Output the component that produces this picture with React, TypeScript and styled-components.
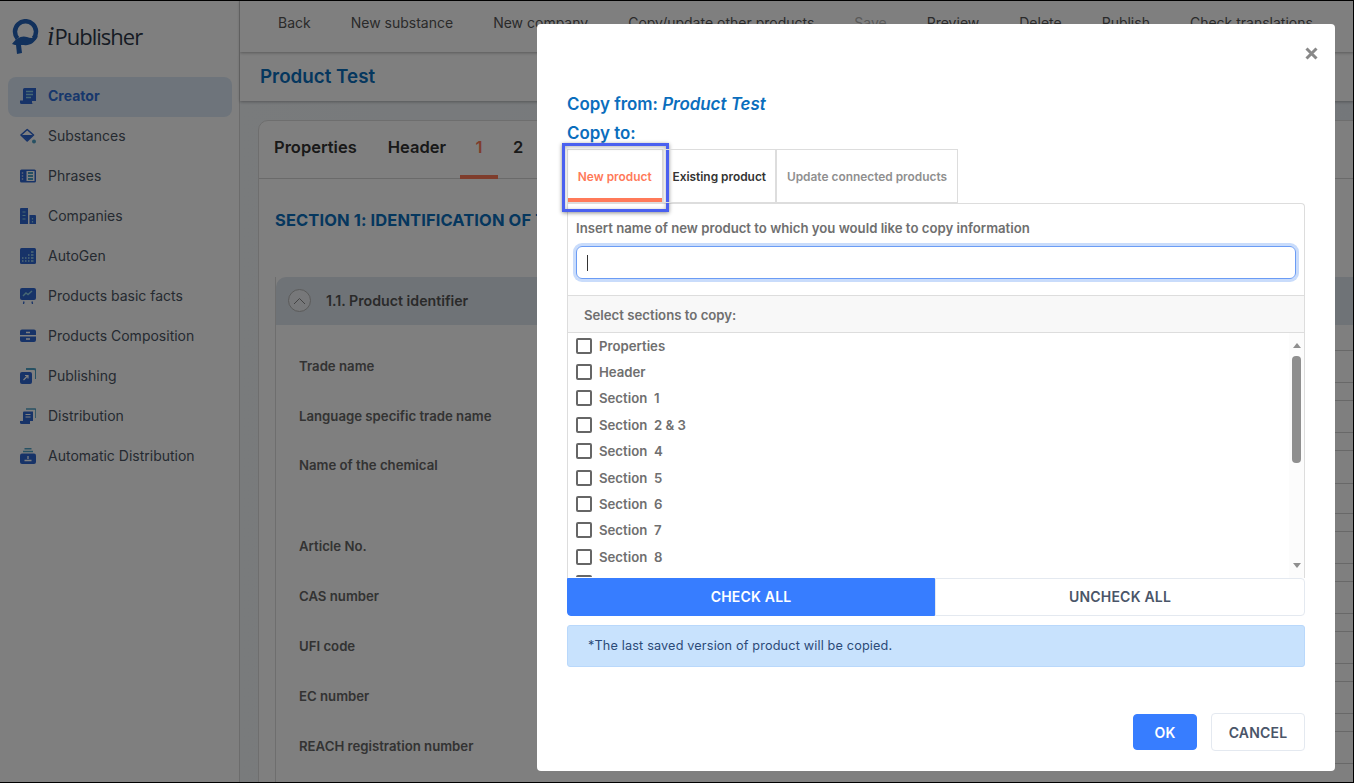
import React, { FC, ReactNode } from 'react'
import styled, { createGlobalStyle } from 'styled-components'

const GlobalStyle = createGlobalStyle`
	html, body {
		margin: 0;
		height: 100%;
		overflow: hidden;
		font-family: Inter, "Liberation Sans", sans-serif;
	}
	* {
		box-sizing: border-box;
	}
`

const Page = styled.div`
	display: flex;
	width: 1354px;
	height: 783px;
	overflow: hidden;
	background: #eef3f8;
`

const Sidebar = styled.aside`
	flex: 0 0 240px;
	height: 100%;
	padding: 0 7px 0 8px;
	background: #fff;
	border-right: 1px solid #d9d9d9;
`

const LogoRow = styled.div`
	display: flex;
	align-items: center;
	height: 76px;
	padding: 0 0 3px 4px;
`

const LogoText = styled.div`
	margin-left: 7px;
	font-family: "Open Sans", sans-serif;
	font-size: 22px;
	letter-spacing: -1px;
	color: #2d3748;
	i {
		font-family: "Liberation Serif", serif;
		font-size: 27px;
		margin-right: 1px;
	}
`

const NavList = styled.nav`
	display: flex;
	flex-direction: column;
	margin-top: 1px;
`

const NavItem = styled.div<{ $active?: boolean }>`
	display: flex;
	align-items: center;
	gap: 12px;
	height: 40px;
	padding: 0 0 3px 12px;
	border-radius: 8px;
	font-size: 14px;
	font-weight: ${p => (p.$active ? 700 : 400)};
	color: ${p => (p.$active ? '#2f6fd8' : '#4b5563')};
	background: ${p => (p.$active ? '#dde9f6' : 'transparent')};
`

const Main = styled.main`
	flex: 1;
	display: flex;
	flex-direction: column;
	min-width: 0;
`

const Toolbar = styled.div`
	display: flex;
	flex: 0 0 52px;
	align-items: center;
	padding: 0 0 8px 38px;
	gap: 40px;
	background: #fff;
	box-shadow: 0 1px 3px rgba(0, 0, 0, 0.3);
	white-space: nowrap;
	position: relative;
	z-index: 2;
`

const ToolItem = styled.span<{ $muted?: boolean }>`
	font-size: 14px;
	color: ${p => (p.$muted ? '#b5b5b5' : '#555')};
`

const TitleBar = styled.div`
	display: flex;
	flex: 0 0 49px;
	align-items: center;
	padding: 0 0 0 20px;
	background: #fff;
	box-shadow: 0 1px 3px rgba(0, 0, 0, 0.3);
	font-size: 18.8px;
	font-weight: 600;
	color: #0a6ebd;
	position: relative;
	z-index: 1;
`

const Content = styled.div`
	flex: 1;
	padding: 19px 0 0 18px;
	overflow: hidden;
	background: linear-gradient(90deg, #f2f6f9, #e9eff5);
`

const Card = styled.section`
	width: 1200px;
	height: 800px;
	background: #fff;
	border: 1px solid #dcdcdc;
	border-radius: 10px;
`

const CardTabs = styled.div`
	display: flex;
	height: 58px;
	padding-left: 15px;
	border-bottom: 1px solid #d5d5d5;
`

const CardTab = styled.div<{ $active?: boolean; $wide?: boolean; $pad?: number }>`
	display: flex;
	align-items: center;
	justify-content: center;
	height: 58px;
	padding: 0 ${p => p.$pad ?? 0}px 2px 0;
	width: ${p => (p.$wide ? 'auto' : '38px')};
	font-size: 16.5px;
	font-weight: 600;
	color: ${p => (p.$active ? '#ff7a59' : '#333')};
	border-bottom: 4px solid ${p => (p.$active ? '#ff7a59' : 'transparent')};
	margin-right: ${p => (p.$active ? '1px' : '0')};
`

const SectionTitle = styled.h2`
	margin: 31px 0 0 16px;
	font-size: 16.5px;
	line-height: 20px;
	font-weight: 700;
	letter-spacing: 0.1px;
	white-space: nowrap;
	color: #0a6ebd;
`

const Accordion = styled.div`
	min-height: 600px;
	margin: 47px 0 0 16px;
	border-left: 1px solid #dcdcdc;
`

const AccordionHead = styled.div`
	display: flex;
	align-items: center;
	gap: 15px;
	height: 48px;
	margin-bottom: 24px;
	padding: 0 0 1px 12px;
	border-radius: 10px 0 0 0;
	background: #dfe6ee;
	font-size: 14.2px;
	font-weight: 600;
	color: #555;
`

const RoundChevron = styled.span`
	display: flex;
	align-items: center;
	justify-content: center;
	width: 23px;
	height: 23px;
	border: 1px solid #b5b5b5;
	border-radius: 50%;
	background: #eef1f4;
`

const FormRow = styled.div<{ $tall?: boolean }>`
	display: flex;
	height: ${p => (p.$tall ? '81px' : '50px')};
	padding: 9px 0 0 23px;
`

const FormLabel = styled.div<{ $raised?: boolean }>`
	flex: 0 0 260px;
	margin-top: ${p => (p.$raised ? '-1px' : '0')};
	font-size: 13.2px;
	line-height: 16px;
	font-weight: 600;
	color: #666;
`

const FormField = styled.div<{ $tall?: boolean }>`
	flex: 1;
	height: ${p => (p.$tall ? '64px' : '33px')};
	margin-top: -8px;
	border: 1px solid #d0d0d0;
`

const FormFieldSplit = styled.div`
	height: 33px;
	border-bottom: 1px solid #d0d0d0;
`

const Overlay = styled.div`
	position: fixed;
	inset: 0;
	z-index: 10;
	display: flex;
	justify-content: flex-end;
	align-items: flex-start;
	padding: 24px 18px 0 0;
	background: rgba(0, 0, 0, 0.5);
	border: solid #000;
	border-width: 1px 1px 1px 0;
`

const Modal = styled.div`
	position: relative;
	display: flex;
	flex-direction: column;
	width: 798px;
	height: 747px;
	margin-top: -1px;
	padding: 69px 30px 0;
	border-radius: 4px;
	background: #fff;
`

const CloseButton = styled.button`
	position: absolute;
	top: 23px;
	right: 17px;
	display: flex;
	padding: 0;
	border: 0;
	background: none;
`

const CopyHeading = styled.div`
	font-size: 16.9px;
	line-height: 22px;
	margin-bottom: 7px;
	font-weight: 600;
	color: #0a6ebd;
	i {
		font-weight: 600;
	}
`

const TabRow = styled.div`
	display: flex;
	align-items: stretch;
	height: 54px;
	margin-top: -2px;
`

const TabButton = styled.div<{ $tone: string; $width: number; $active?: boolean }>`
	position: relative;
	display: flex;
	align-items: center;
	justify-content: center;
	width: ${p => p.$width}px;
	padding-top: 1px;
	border: 1px solid #ddd;
	font-size: 11.9px;
	font-weight: 600;
	white-space: nowrap;
	color: ${p => p.$tone};
	${p => p.$active && 'box-shadow: inset 0 -4px 0 #ff7a59;'}
`

const Callout = styled.span`
	position: absolute;
	top: -7px;
	left: -6px;
	right: -7px;
	bottom: -10px;
	border: 3px solid #4a60f0;
	box-shadow: 0 1px 4px rgba(0, 0, 0, 0.45), inset 0 1px 4px rgba(0, 0, 0, 0.3);
	pointer-events: none;
`

const Panel = styled.div`
	display: flex;
	flex-direction: column;
	height: 375px;
	border: 1px solid #ddd;
	border-bottom: 0;
	border-top-right-radius: 4px;
`

const FieldLabel = styled.label`
	margin: 16px 0 0 8px;
	font-size: 13.18px;
	line-height: 16px;
	font-weight: 600;
	color: #6f6f6f;
`

const NameInput = styled.div`
	display: flex;
	align-items: center;
	height: 33px;
	margin: 10px 8px 0;
	padding-left: 10px;
	border: 1px solid #6b9cf5;
	border-radius: 6px;
	box-shadow: 0 0 0 3px #c9dcfb;
`

const Caret = styled.span`
	width: 1px;
	height: 16px;
	background: #333;
`

const SectionsHead = styled.div`
	display: flex;
	align-items: center;
	height: 38px;
	margin-top: 16px;
	padding: 1px 0 0 16px;
	border-top: 1px solid #ddd;
	border-bottom: 1px solid #ddd;
	background: #f8f8f8;
	font-size: 13.2px;
	font-weight: 600;
	color: #6f6f6f;
`

const SectionsBody = styled.div`
	flex: 1;
	display: flex;
	min-height: 0;
`

const SectionList = styled.div`
	flex: 1;
	height: 244px;
	padding-left: 8px;
	overflow: hidden;
`

const SectionRows = styled.div`
	margin-top: -0.6px;
`

const SectionRow = styled.label`
	display: flex;
	align-items: center;
	gap: 7px;
	height: 26.4px;
	font-size: 13.2px;
	font-weight: 600;
	white-space: pre;
	color: #6f6f6f;
`

const Checkbox = styled.span`
	flex: 0 0 16px;
	height: 16px;
	border: 2px solid #666;
	border-radius: 2px;
`

const ScrollTrack = styled.div`
	display: flex;
	flex: 0 0 15px;
	flex-direction: column;
	align-items: center;
	padding-top: 10px;
	background: #fcfcfc;
`

const ScrollThumb = styled.div`
	width: 9px;
	height: 107px;
	margin-top: 8px;
	border-radius: 4px;
	background: #8f8f8f;
`

const ScrollArrow = styled.span<{ $down?: boolean }>`
	width: 0;
	height: 0;
	border-left: 4.5px solid transparent;
	border-right: 4.5px solid transparent;
	${p => (p.$down ? 'border-top: 5px solid #8f8f8f; margin-top: 100px;' : 'border-bottom: 5px solid #8f8f8f;')}
`

const CheckButtons = styled.div`
	display: flex;
	height: 38px;
`

const CheckButton = styled.div<{ $primary?: boolean }>`
	display: flex;
	flex: ${p => (p.$primary ? '0 0 368px' : '1')};
	align-items: center;
	justify-content: center;
	padding-bottom: 1px;
	font-size: 14px;
	font-weight: 600;
	letter-spacing: 0.2px;
	color: ${p => (p.$primary ? '#fff' : '#4a5568')};
	background: ${p => (p.$primary ? '#377dff' : '#fff')};
	border: 1px solid ${p => (p.$primary ? '#377dff' : '#e4e9f0')};
	border-radius: ${p => (p.$primary ? '0 0 0 4px' : '0 4px 4px 0')};
`

const Notice = styled.div`
	display: flex;
	align-items: center;
	height: 42px;
	margin-top: 9px;
	padding: 0 0 2px 20px;
	border: 1px solid #b9d8fb;
	border-radius: 3px;
	background: #c8e2fd;
	font-size: 12.7px;
	letter-spacing: 0.15px;
	color: #2b4a78;
`

const Footer = styled.div`
	display: flex;
	justify-content: flex-end;
	align-items: center;
	gap: 14px;
	margin-top: 46px;
`

const FootButton = styled.button<{ $primary?: boolean; $width: number }>`
	width: ${p => p.$width}px;
	height: ${p => (p.$primary ? 36 : 38)}px;
	padding: 0;
	font: 600 14px Inter, sans-serif;
	letter-spacing: 0.2px;
	color: ${p => (p.$primary ? '#fff' : '#4a5568')};
	background: ${p => (p.$primary ? '#377dff' : '#fff')};
	border: 1px solid ${p => (p.$primary ? '#377dff' : '#e4e9f0')};
	border-radius: 4px;
`

const Ico: FC<{ children: ReactNode }> = ({ children }) => (
	<svg width="16" height="16" viewBox="0 0 16 16" style={{ flex: '0 0 16px' }}>
		{children}
	</svg>
)

const B = '#2f66d0'
const T = '#4fa3c7'

const icons: Record<string, ReactNode> = {
	creator: (
		<Ico>
			<path d="M3 1.500A1.500 1.500 0 0 1 4.500 0H16v13H3z" fill={B} />
			<path d="M0 12.500h12v2a1.500 1.500 0 0 0 1.500 1.500H1.500A1.500 1.500 0 0 1 0 14.500z" fill={B} />
			<path d="M6 3.500h7M6 6.500h7M6 9.500h5" stroke="#8fd0e6" strokeWidth="1.300" />
		</Ico>
	),
	substances: (
		<Ico>
			<path d="M7.200 1.500L13.500 7 7.200 13 1 7z" fill="#fff" stroke={B} strokeWidth="1.600" strokeLinejoin="round" />
			<path d="M1.500 7h11.500L7.200 12.500z" fill={B} />
			<circle cx="14" cy="13.500" r="2" fill={T} />
		</Ico>
	),
	phrases: (
		<Ico>
			<rect y="1.500" width="16" height="13" rx="1.500" fill={B} />
			<rect x="6.500" y="3" width="8" height="10" fill="#fff" />
			<path d="M8 5h5M8 8h5M8 11h5" stroke={T} strokeWidth="1.800" />
			<path d="M2.500 4.500v1M2.500 7.500v1M2.500 10.500v1" stroke="#fff" strokeWidth="1.400" />
		</Ico>
	),
	companies: (
		<Ico>
			<path d="M1 0h7v16H0V1a1 1 0 0 1 1-1z" fill={B} />
			<path d="M9.500 7H15a1 1 0 0 1 1 1v8H9.500z" fill={B} />
			<path d="M2.500 4h3M2.500 7.500h3M2.500 11h3M12.500 10v1.500M12.500 13v1.500" stroke="#8fd0e6" strokeWidth="1.200" />
		</Ico>
	),
	autogen: (
		<Ico>
			<rect width="16" height="16" rx="1.500" fill={B} />
			<path d="M2 13h1.500M5 13h1.500M8 13h1.500M11 13h2.500M5 10h1.500M8 10h1.500M11 10h2.500M2 10h1.500M8 7h1.500M11 7h2.500M11 4h2.500" stroke="#9fd4ea" strokeWidth="1.500" />
		</Ico>
	),
	facts: (
		<Ico>
			<rect width="16" height="12" rx="2" fill={B} />
			<path d="M3 8l3-3 2 1.500L12 3" stroke="#8fd0e6" strokeWidth="1.400" fill="none" />
			<path d="M4 13.500L3.500 16M12 13.500l.500 2.500" stroke={B} strokeWidth="1.300" />
		</Ico>
	),
	composition: (
		<Ico>
			<path d="M2 1.500h12a2 2 0 0 1 2 2V7H0V3.500a2 2 0 0 1 2-2zM0 8.500h16V12a2 2 0 0 1-2 2H2a2 2 0 0 1-2-2z" fill={B} />
			<path d="M6 4.500h4M6 11h4" stroke="#fff" strokeWidth="1.300" />
		</Ico>
	),
	publishing: (
		<Ico>
			<path d="M6 1h8a2 2 0 0 1 2 2v8" stroke={T} strokeWidth="2" fill="none" />
			<rect y="4" width="12" height="12" rx="2" fill={B} />
			<path d="M3.500 12L8 7.500M5 7.500h3V10.500" stroke="#fff" strokeWidth="1.200" fill="none" />
		</Ico>
	),
	distribution: (
		<Ico>
			<path d="M6 1h9a1 1 0 0 1 1 1v8" stroke={T} strokeWidth="1.600" fill="none" />
			<path d="M3 4.500a1 1 0 0 1 1-1h9V13H3z" fill={B} />
			<path d="M0 13h10v3H1.500A1.500 1.500 0 0 1 0 14.500z" fill={B} />
			<path d="M5.500 6.500h5M5.500 9h5" stroke="#fff" strokeWidth="1.200" />
		</Ico>
	),
	automatic: (
		<Ico>
			<path d="M4.500 .800h7M3 3.500h10" stroke={T} strokeWidth="1.500" />
			<rect y="5.500" width="16" height="10.500" rx="2" fill={B} />
			<path d="M8 8v3M4.500 12.500h7" stroke="#fff" strokeWidth="1.300" />
		</Ico>
	),
}

const navItems = [
	{ label: 'Creator', icon: 'creator', active: true },
	{ label: 'Substances', icon: 'substances' },
	{ label: 'Phrases', icon: 'phrases' },
	{ label: 'Companies', icon: 'companies' },
	{ label: 'AutoGen', icon: 'autogen' },
	{ label: 'Products basic facts', icon: 'facts' },
	{ label: 'Products Composition', icon: 'composition' },
	{ label: 'Publishing', icon: 'publishing' },
	{ label: 'Distribution', icon: 'distribution' },
	{ label: 'Automatic Distribution', icon: 'automatic' },
]

const toolItems = [
	'Back',
	'New substance',
	'New company',
	'Copy/update other products',
	'Save',
	'Preview',
	'Delete',
	'Publish',
	'Check translations',
]

const formRows = [
	'Trade name',
	'Language specific trade name',
	'Name of the chemical',
	'Article No.',
	'CAS number',
	'UFI code',
	'EC number',
	'REACH registration number',
]

const sections = [
	'Properties',
	'Header',
	'Section  1',
	'Section  2 & 3',
	'Section  4',
	'Section  5',
	'Section  6',
	'Section  7',
	'Section  8',
	'Section  9',
]

const App: FC = () => (
	<Page>
		<GlobalStyle />
		<Sidebar>
			<LogoRow>
				<svg width="28" height="36" viewBox="0 0 28 36">
					<path d="M5.500 19.500A10.500 10.500 0 1 1 21.500 19.500" fill="none" stroke="#2563b8" strokeWidth="4.500" />
					<path d="M0 25C4 19 10 16 15 18c3 1 6 2 11-1-3 7-9 10-14 9H3z" fill="#2563b8" />
					<path d="M4 26h5l1 8-5 1z" fill="#2563b8" />
				</svg>
				<LogoText>
					<i>i</i>Publisher
				</LogoText>
			</LogoRow>
			<NavList>
				{navItems.map(it => (
					<NavItem key={it.label} $active={it.active}>
						{icons[it.icon]}
						{it.label}
					</NavItem>
				))}
			</NavList>
		</Sidebar>
		<Main>
			<Toolbar>
				{toolItems.map(it => (
					<ToolItem key={it} $muted={it === 'Save'}>
						{it}
					</ToolItem>
				))}
			</Toolbar>
			<TitleBar>Product Test</TitleBar>
			<Content>
				<Card>
					<CardTabs>
						<CardTab $wide $pad={31}>
							Properties
						</CardTab>
						<CardTab $wide $pad={14}>
							Header
						</CardTab>
						<CardTab $active>1</CardTab>
						<CardTab>2</CardTab>
					</CardTabs>
					<SectionTitle>SECTION 1: IDENTIFICATION OF THE SUBSTANCE</SectionTitle>
					<Accordion>
						<AccordionHead>
							<RoundChevron>
								<svg width="13" height="8" viewBox="0 0 13 8">
									<path d="M1 7l5.500-5.500L12 7" fill="none" stroke="#888" />
								</svg>
							</RoundChevron>
							1.1. Product identifier
						</AccordionHead>
						{formRows.map((it, i) => (
							<FormRow key={it} $tall={i === 2}>
								<FormLabel $raised={i >= 2}>{it}</FormLabel>
								<FormField $tall={i === 2}>{i === 2 && <FormFieldSplit />}</FormField>
							</FormRow>
						))}
					</Accordion>
				</Card>
			</Content>
		</Main>
		<Overlay>
			<Modal>
				<CloseButton aria-label="Close">
					<svg width="13" height="13" viewBox="0 0 13 13">
						<path d="M1.500 1.500l10 10M11.500 1.500l-10 10" stroke="#888" strokeWidth="3" />
					</svg>
				</CloseButton>
				<CopyHeading>
					Copy from: <i>Product Test</i>
				</CopyHeading>
				<CopyHeading>Copy to:</CopyHeading>
				<TabRow>
					<TabButton $tone="#ff7a59" $width={95.5} $active>
						New product
						<Callout />
					</TabButton>
					<TabButton $tone="#333" $width={113.5}>
						Existing product
					</TabButton>
					<TabButton $tone="#8f8f8f" $width={182}>
						Update connected products
					</TabButton>
				</TabRow>
				<Panel>
					<FieldLabel>Insert name of new product to which you would like to copy information</FieldLabel>
					<NameInput>
						<Caret />
					</NameInput>
					<SectionsHead>Select sections to copy:</SectionsHead>
					<SectionsBody>
						<SectionList>
							<SectionRows>
								{sections.map(it => (
									<SectionRow key={it}>
										<Checkbox />
										{it}
									</SectionRow>
								))}
							</SectionRows>
						</SectionList>
						<ScrollTrack>
							<ScrollArrow />
							<ScrollThumb />
							<ScrollArrow $down />
						</ScrollTrack>
					</SectionsBody>
				</Panel>
				<CheckButtons>
					<CheckButton $primary>CHECK ALL</CheckButton>
					<CheckButton>UNCHECK ALL</CheckButton>
				</CheckButtons>
				<Notice>*The last saved version of product will be copied.</Notice>
				<Footer>
					<FootButton $primary $width={64}>
						OK
					</FootButton>
					<FootButton $width={94}>CANCEL</FootButton>
				</Footer>
			</Modal>
		</Overlay>
	</Page>
)

export default App
